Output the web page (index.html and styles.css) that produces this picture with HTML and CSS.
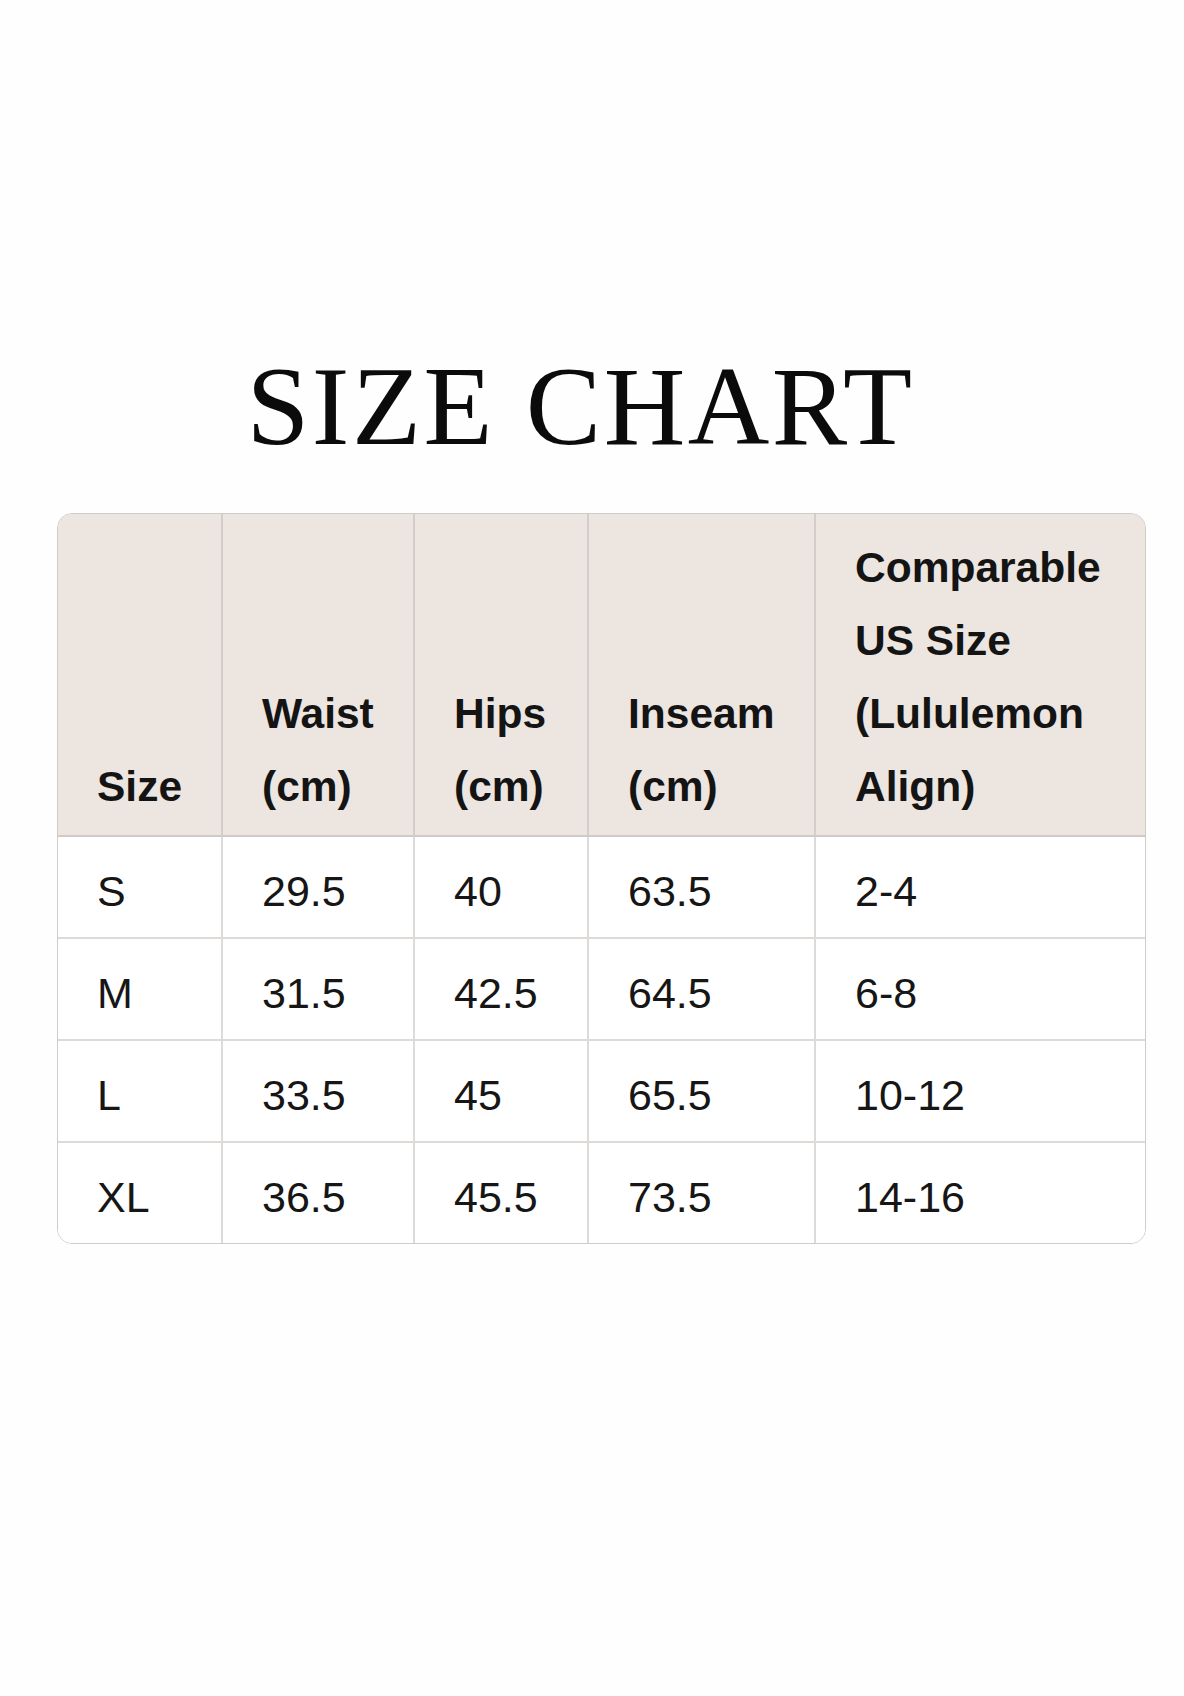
FILE: index.html
```html
<!DOCTYPE html>
<html lang="en">
<head>
<meta charset="utf-8">
<title>Size Chart</title>
<link rel="stylesheet" href="styles.css">
</head>
<body>
<main class="page">
  <h1 class="title">SIZE CHART</h1>
  <div class="chart-wrap">
    <table class="chart">
      <colgroup>
        <col class="c-size">
        <col class="c-waist">
        <col class="c-hips">
        <col class="c-inseam">
        <col class="c-us">
      </colgroup>
      <thead>
        <tr>
          <th>Size</th>
          <th>Waist (cm)</th>
          <th>Hips (cm)</th>
          <th>Inseam (cm)</th>
          <th>Comparable US Size (Lululemon Align)</th>
        </tr>
      </thead>
      <tbody>
        <tr><td>S</td><td>29.5</td><td>40</td><td>63.5</td><td>2-4</td></tr>
        <tr><td>M</td><td>31.5</td><td>42.5</td><td>64.5</td><td>6-8</td></tr>
        <tr><td>L</td><td>33.5</td><td>45</td><td>65.5</td><td>10-12</td></tr>
        <tr><td>XL</td><td>36.5</td><td>45.5</td><td>73.5</td><td>14-16</td></tr>
      </tbody>
    </table>
  </div>
</main>
</body>
</html>
```
FILE: styles.css
```css
* { box-sizing: border-box; }

html, body {
  margin: 0;
  padding: 0;
  background: #fefefe;
}

.page {
  width: 1184px;
  min-height: 1696px;
  padding-top: 350px;
}

.title {
  margin: 0;
  padding-right: 23px;
  font-family: "Liberation Serif", "Times New Roman", serif;
  font-weight: 400;
  font-size: 113px;
  line-height: 112px;
  letter-spacing: 2.5px;
  text-align: center;
  color: #0b0b0b;
}

.chart-wrap {
  margin-top: 51px;
  padding: 0 40px 0 57px;
}

.chart {
  width: 1087px;
  table-layout: fixed;
  border-collapse: separate;
  border-spacing: 0;
  border: 1px solid #cfcbc7;
  border-radius: 15px;
  overflow: hidden;
  font-family: "Liberation Sans", Arial, sans-serif;
  font-size: 43px;
  color: #161616;
}

.c-size { width: 165px; }
.c-waist { width: 192px; }
.c-hips { width: 174px; }
.c-inseam { width: 227px; }
.c-us { width: 329px; }

.chart th {
  background: #ece5e0;
  font-weight: 700;
  font-size: 42.5px;
  text-align: left;
  vertical-align: bottom;
  line-height: 73px;
  padding: 17px 14px 12px 39px;
  border-right: 2px solid #d2cecb;
  border-bottom: 2px solid #d0cbc8;
  color: #141414;
}

.chart td {
  font-weight: 400;
  text-align: left;
  vertical-align: middle;
  line-height: 50px;
  padding: 29px 16px 21px 39px;
  border-right: 2px solid #dedad7;
  border-bottom: 2px solid #dedad7;
  background: #ffffff;
}

.chart th:last-child,
.chart td:last-child {
  border-right: none;
}

.chart tbody tr:last-child td {
  border-bottom: none;
}
```
